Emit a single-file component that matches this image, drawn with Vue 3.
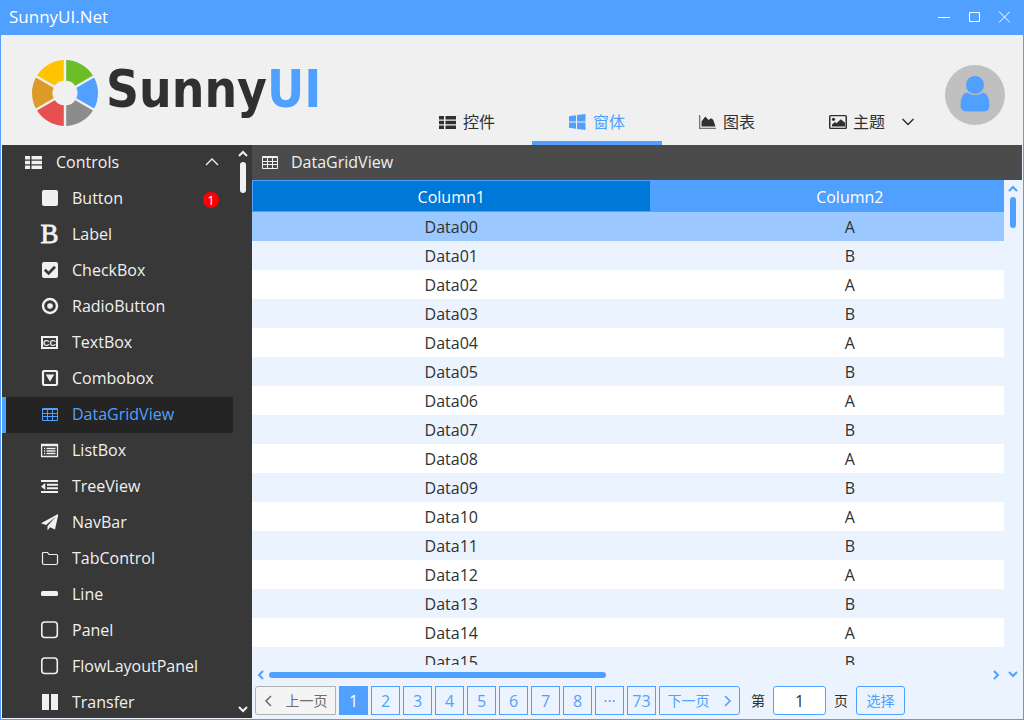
<script setup>
import { ref } from 'vue'

const icons = {
  thlist: '<path d="M0 3h5v3.6H0zM6.5 3H17v3.6H6.500zM0 7.800h5v3.400H0zM6.500 7.800H17v3.400H6.500zM0 12.400h5V16H0zM6.500 12.400H17V16H6.500z"/>',
  windows: '<path d="M0 3.300 7 2.300V8.500H0zM8 2.100 16.500 1v7.500H8zM0 9.500h7v6.200L0 14.700zM8 9.500h8.500V17L8 15.900z"/>',
  area: '<path d="M0 2h1.300v12.700H17V16H0z" opacity=".65"/><path d="M2.500 13.500V8.500L6.300 3.500 9.500 7l2.500-1.800 2.200 1.500 2.300 6.800z"/>',
  image: '<path d="M1.500 2h15A1.500 1.500 0 0 1 18 3.500v11a1.500 1.500 0 0 1-1.500 1.500h-15A1.500 1.500 0 0 1 0 14.500v-11A1.500 1.500 0 0 1 1.500 2zm0 1.300v11.400h15V3.300z" fill-rule="evenodd"/><circle cx="4.500" cy="6.300" r="1.600"/><path d="M3 13.500v-2L6 9l1.500 1.200 4.300-4 4.200 3.600v3.700z"/>',
  square: '<rect x="1" y="1" width="16" height="16" rx="2"/>',
  bold: '<text x="8.500" y="18" text-anchor="middle" font-family="Liberation Serif, serif" font-size="27" stroke="currentColor" stroke-width=".8">B</text>',
  check: '<rect x="1" y="1" width="16" height="16" rx="2"/><path d="M3.800 8.700 7.600 12.400 14 5.700" fill="none" stroke="#383838" stroke-width="2.700"/>',
  radio: '<circle cx="9" cy="9" r="7" fill="none" stroke="currentColor" stroke-width="2.400"/><circle cx="9" cy="9" r="2.800"/>',
  cc: '<rect x="1" y="4" width="15" height="11" fill="none" stroke="currentColor" stroke-width="2"/><text x="8.500" y="12.800" text-anchor="middle" font-family="Liberation Sans, sans-serif" font-weight="700" font-size="9">CC</text>',
  combo: '<rect x="2" y="2" width="14" height="14" rx="1" fill="none" stroke="currentColor" stroke-width="2.200"/><path d="M4.800 5.500h8.400L9 12.800z"/>',
  table: '<path d="M1.500 3.500h15v12h-15zM1.500 4.500h15M1.500 8.500h15M1.500 11.500h15M6.500 4v11.500M11.500 4v11.500" fill="none" stroke="currentColor"/>',
  list: '<path d="M.600 3.500h15.900v12H.600zM.600 4.500h16M3 7.500h1.200M5.500 7.500h9M3 10h1.200M5.500 10h9M3 12.500h1.200M5.500 12.500h9" fill="none" stroke="currentColor" stroke-width="1.300"/>',
  outdent: '<path d="M0 3h17v2H0zM6 6.800h11v2H6zM6 10.200h11v2H6zM0 14h17v2H0zM0 9.500 4.300 6v7z"/>',
  plane: '<path d="M17 1v2L14 16.500 9 14.300 6.500 17.500V13L15 3.500 5 12 0 10.200z"/>',
  folder: '<path d="M1.500 4.200q0-.700.700-.700h4.300l1.500 2h7.500q1 0 1 1v7.500q0 1.500-1.500 1.500H3q-1.500 0-1.500-1.500z" fill="none" stroke="currentColor" stroke-width="1.200"/>',
  minus: '<rect x="0" y="6" width="17" height="5" rx="1.500"/>',
  squareo: '<rect x=".800" y="1" width="15.500" height="15.500" rx="3" fill="none" stroke="currentColor" stroke-width="1.600"/>',
  columns: '<path d="M1 1h7v16H1zM10 1h7v16h-7z"/>',
}

const tabs = [
  { text: '控件', icon: 'thlist' },
  { text: '窗体', icon: 'windows' },
  { text: '图表', icon: 'area' },
  { text: '主题', icon: 'image', menu: true },
]
const activeTab = ref('窗体')

const controls = [
  { text: 'Button', icon: 'square', badge: 1 },
  { text: 'Label', icon: 'bold' },
  { text: 'CheckBox', icon: 'check' },
  { text: 'RadioButton', icon: 'radio' },
  { text: 'TextBox', icon: 'cc' },
  { text: 'Combobox', icon: 'combo' },
  { text: 'DataGridView', icon: 'table' },
  { text: 'ListBox', icon: 'list' },
  { text: 'TreeView', icon: 'outdent' },
  { text: 'NavBar', icon: 'plane' },
  { text: 'TabControl', icon: 'folder' },
  { text: 'Line', icon: 'minus' },
  { text: 'Panel', icon: 'squareo' },
  { text: 'FlowLayoutPanel', icon: 'squareo' },
  { text: 'Transfer', icon: 'columns' },
]
const activeControl = ref('DataGridView')

const rows = Array.from({ length: 16 }, (_, i) => ({
  name: 'Data' + String(i).padStart(2, '0'),
  value: i % 2 ? 'B' : 'A',
}))
const selectedRow = ref(0)

const pages = ['1', '2', '3', '4', '5', '6', '7', '8', '···', '73']
const page = ref('1')
const target = ref('1')
</script>

<template>
  <div class="window">
    <header class="titlebar">
      <span class="caption">SunnyUI.Net</span>
      <button class="winbtn" aria-label="Minimize"><svg width="12" height="12"><path d="M0 6.500h12" /></svg></button>
      <button class="winbtn" aria-label="Maximize"><svg width="12" height="12"><path d="M1.500 1.500h10v9h-10z" /></svg></button>
      <button class="winbtn" aria-label="Close"><svg width="12" height="12"><path d="M1 .5l11 11M12 .5l-11 11" /></svg></button>
    </header>

    <div class="banner">
      <div class="brand">
        <svg class="wheel" width="68" height="68" viewBox="-34 -34 68 68" aria-hidden="true">
          <g fill="none" stroke-width="20.500">
            <path d="M0-22.750A22.750 22.750 0 0 1 19.700-11.375" stroke="#6cbe28" />
            <path d="M19.700-11.375A22.750 22.750 0 0 1 19.700 11.375" stroke="#50a0ff" />
            <path d="M19.700 11.375A22.750 22.750 0 0 1 0 22.750" stroke="#8c8c8c" />
            <path d="M0 22.750A22.750 22.750 0 0 1-19.700 11.375" stroke="#e65050" />
            <path d="M-19.700 11.375A22.750 22.750 0 0 1-19.700-11.375" stroke="#dc9b28" />
            <path d="M-19.700-11.375A22.750 22.750 0 0 1 0-22.750" stroke="#ffc400" />
          </g>
          <path d="M0-34V34M-29.440-17 29.440 17M29.440-17-29.440 17" stroke="#f0f0f0" stroke-width="2.400" />
        </svg>
        <span class="wordmark">Sunny<b>UI</b></span>
      </div>

      <nav class="tabs">
        <button
          v-for="t in tabs"
          :key="t.text"
          class="tab"
          :class="{ active: activeTab === t.text }"
          @click="activeTab = t.text"
        >
          <svg class="icon" viewBox="0 0 18 18" aria-hidden="true" v-html="icons[t.icon]"></svg>
          <span>{{ t.text }}</span>
          <svg v-if="t.menu" class="caret" width="14" height="8" aria-hidden="true"><path d="M1.500 1 7 6.500 12.500 1" /></svg>
        </button>
      </nav>

      <svg class="avatar" viewBox="0 0 60 60" role="img" aria-label="User">
        <circle cx="30" cy="30" r="30" fill="#c0c0c0" />
        <path d="M22 27.500Q30 32.500 38 27.500 44.500 29 44.500 40 44.500 46.500 39 46.500H21Q15.500 46.500 15.500 40 15.500 29 22 27.500z" fill="#50a0ff" />
        <circle cx="30" cy="20" r="9.500" fill="#50a0ff" stroke="#c0c0c0" />
      </svg>
    </div>

    <div class="body">
      <aside class="sidebar">
        <ul class="tree">
          <li>
            <button class="node root">
              <svg class="icon" viewBox="0 0 18 18" aria-hidden="true" v-html="icons.thlist"></svg>
              <span class="label">Controls</span>
              <svg class="fold" width="14" height="8" aria-hidden="true"><path d="M1 7 7 1 13 7" /></svg>
            </button>
          </li>
          <li v-for="c in controls" :key="c.text">
            <button class="node" :class="{ active: activeControl === c.text }" @click="activeControl = c.text">
              <svg class="icon" viewBox="0 0 18 18" aria-hidden="true" v-html="icons[c.icon]"></svg>
              <span class="label">{{ c.text }}</span>
              <span v-if="c.badge" class="badge">{{ c.badge }}</span>
            </button>
          </li>
        </ul>
        <div class="vscroll light">
          <button aria-label="Scroll up"><svg width="10" height="8"><path d="M1 6 5 2 9 6" /></svg></button>
          <span class="thumb"></span>
          <button class="end" aria-label="Scroll down"><svg width="10" height="8"><path d="M1 2 5 6 9 2" /></svg></button>
        </div>
      </aside>

      <main class="content">
        <h1 class="heading">
          <svg class="icon" viewBox="0 0 18 18" aria-hidden="true" v-html="icons.table"></svg>
          DataGridView
        </h1>
        <div class="panel">
          <div class="grid">
            <div class="viewport">
              <table>
                <thead>
                  <tr><th class="current">Column1</th><th>Column2</th></tr>
                </thead>
                <tbody>
                  <tr v-for="(r, i) in rows" :key="r.name" :class="{ selected: selectedRow === i }" @click="selectedRow = i">
                    <td>{{ r.name }}</td><td>{{ r.value }}</td>
                  </tr>
                </tbody>
              </table>
            </div>
            <div class="hscroll">
              <button aria-label="Scroll left"><svg width="8" height="10"><path d="M6 1 2 5 6 9" /></svg></button>
              <div class="track"><span class="thumb"></span></div>
              <button aria-label="Scroll right"><svg width="8" height="10"><path d="M2 1 6 5 2 9" /></svg></button>
            </div>
          </div>
          <div class="vscroll">
            <button aria-label="Scroll up"><svg width="10" height="8"><path d="M1 6 5 2 9 6" /></svg></button>
            <span class="thumb"></span>
            <button class="end" aria-label="Scroll down"><svg width="10" height="8"><path d="M1 2 5 6 9 2" /></svg></button>
          </div>
        </div>

        <div class="pager">
          <button class="step" disabled>
            <svg width="8" height="12" aria-hidden="true"><path d="M7 1 2 6 7 11" /></svg>上一页
          </button>
          <button v-for="p in pages" :key="p" class="num" :class="{ on: page === p }" @click="page = p">{{ p }}</button>
          <button class="step">
            下一页<svg width="8" height="12" aria-hidden="true"><path d="M1 1 6 6 1 11" /></svg>
          </button>
          <label class="jump">第<input v-model="target" type="text" aria-label="页码" />页</label>
          <button class="pick">选择</button>
        </div>
      </main>
    </div>
  </div>
</template>

<style>
body {
  margin: 0;
}
</style>

<style scoped>
* {
  box-sizing: border-box;
}
.window {
  display: flex;
  flex-direction: column;
  height: 100vh;
  overflow: hidden;
  border: 1px solid #50a0ff;
  background: #ebf3ff;
  color: #303030;
  font-family: "Open Sans", "Noto Sans CJK SC", sans-serif;
  font-size: 16px;
  line-height: 24px;
}
button {
  display: flex;
  align-items: center;
  margin: 0;
  padding: 0;
  border: 0;
  background: none;
  color: inherit;
  font: inherit;
  line-height: inherit;
}
svg {
  display: block;
  flex: none;
}
button svg:not(.icon) {
  fill: none;
  stroke: currentColor;
}
.icon {
  width: 18px;
  height: 18px;
  fill: currentColor;
  overflow: visible;
}

.titlebar {
  display: flex;
  flex: none;
  height: 34px;
  padding: 0 4px 2px 8px;
  background: #50a0ff;
  color: #fff;
}
.caption {
  flex: 1;
  font-size: 17px;
  line-height: 32px;
}
.winbtn {
  justify-content: center;
  width: 30px;
}

.banner {
  display: flex;
  flex: none;
  height: 110px;
  padding-right: 18px;
  background: #f0f0f0;
}
.brand {
  display: flex;
  flex: 1;
  align-items: center;
  padding: 5px 0 0 30px;
}
.wordmark {
  margin: 0 0 6px 7px;
  font-family: "DejaVu Sans Condensed", "DejaVu Sans", sans-serif;
  font-size: 51px;
  font-weight: 700;
  font-stretch: condensed;
  line-height: 60px;
}
.wordmark b {
  color: #50a0ff;
}
.tabs {
  display: flex;
  align-items: flex-end;
}
.tab {
  position: relative;
  justify-content: center;
  gap: 6px;
  width: 130px;
  height: 46px;
}
.tab.active {
  color: #50a0ff;
  box-shadow: inset 0 -4px #50a0ff;
}
.tab .caret {
  position: absolute;
  right: 7px;
  stroke-width: 1.5;
}
.avatar {
  width: 60px;
  height: 60px;
  margin: 30px 0 0 23px;
}

.body {
  display: flex;
  flex: 1;
  min-height: 0;
  padding: 0 1px 1px;
}
.sidebar {
  display: flex;
  flex: none;
  width: 250px;
  overflow: hidden;
  background: #383838;
  color: #f0f0f0;
}
.tree {
  flex: 1;
  margin: 0;
  padding: 0;
  list-style: none;
}
.node {
  width: 100%;
  height: 36px;
  padding: 0 14px 2px 39px;
  text-align: left;
}
.node.root {
  padding-left: 23px;
}
.node .label {
  flex: 1;
  margin-left: 13px;
}
.node.active {
  background: #242424;
  box-shadow: inset 4px 0 #50a0ff;
  color: #50a0ff;
}
.fold {
  stroke-width: 1.3;
}
.badge {
  width: 16px;
  height: 16px;
  margin-top: 4px;
  border-radius: 50%;
  background: #f00;
  color: #fff;
  font-size: 13px;
  line-height: 16px;
  text-align: center;
}

.vscroll {
  display: flex;
  flex: none;
  flex-direction: column;
  align-items: center;
  width: 18px;
  padding-bottom: 3px;
  color: #50a0ff;
}
.vscroll button {
  justify-content: center;
  width: 18px;
  height: 17px;
}
.vscroll svg,
.hscroll svg {
  stroke-width: 2;
}
.vscroll .thumb {
  width: 6px;
  height: 31px;
  border-radius: 3px;
  background: currentColor;
}
.vscroll .end {
  margin-top: auto;
}
.vscroll.light {
  width: 19px;
  padding-bottom: 1px;
  color: #f0f0f0;
}

.content {
  display: flex;
  flex: 1;
  flex-direction: column;
  min-width: 0;
}
.heading {
  display: flex;
  flex: none;
  align-items: center;
  gap: 12px;
  height: 35px;
  margin: 0;
  padding: 0 9px 2px;
  background: #4b4b4b;
  color: #f0f0f0;
  font-size: 16px;
  font-weight: 400;
}
.panel {
  display: flex;
  flex: 1;
  min-height: 0;
}
.grid {
  display: flex;
  flex: 1;
  flex-direction: column;
  min-width: 0;
}
.viewport {
  flex: 1;
  min-height: 0;
  overflow: hidden;
}
table {
  width: 106%;
  table-layout: fixed;
  border-spacing: 0;
  text-align: center;
}
th {
  height: 32px;
  padding: 2px 0 0;
  border: 1px solid #50a0ff;
  background: #50a0ff;
  color: #fff;
  font-weight: 400;
}
th.current {
  background: #0078d7;
}
td {
  height: 29px;
  padding: 0;
}
tbody tr {
  background: #fff;
}
tbody tr:nth-child(even) {
  background: #ebf3ff;
}
tbody tr.selected {
  background: #9bc8ff;
}
.hscroll {
  display: flex;
  flex: none;
  height: 20px;
  align-items: center;
  padding-bottom: 1px;
  color: #50a0ff;
}
.hscroll button {
  justify-content: center;
  width: 17px;
}
.track {
  flex: 1;
}
.hscroll .thumb {
  display: block;
  width: 47%;
  height: 6px;
  border-radius: 3px;
  background: currentColor;
}

.pager {
  display: flex;
  flex: none;
  gap: 3px;
  height: 33px;
  padding: 1px 3px 3px;
  color: #50a0ff;
}
.pager button {
  justify-content: center;
  border: 1px solid #50a0ff;
}
.pager .num {
  width: 29px;
}
.pager .num.on {
  background: #50a0ff;
  color: #fff;
}
.pager .step {
  gap: 14px;
  width: 81px;
  border-radius: 0 3px 3px 0;
  font-size: 14px;
}
.pager .step svg {
  stroke-width: 1.6;
}
.pager .step:disabled {
  border-color: #adb2b5;
  border-radius: 3px 0 0 3px;
  background: #f4f4f4;
  color: #6d6d6d;
}
.jump {
  display: flex;
  align-items: center;
  gap: 8px;
  margin: 0 5px 0 8px;
  color: #303030;
  font-size: 14px;
}
.jump input {
  width: 53px;
  height: 29px;
  padding: 0;
  border: 1px solid #50a0ff;
  border-radius: 3px;
  background: #fff;
  color: #303030;
  font: inherit;
  font-size: 16px;
  text-align: center;
}
.pager .pick {
  width: 49px;
  border-radius: 3px;
  font-size: 14px;
}
</style>
